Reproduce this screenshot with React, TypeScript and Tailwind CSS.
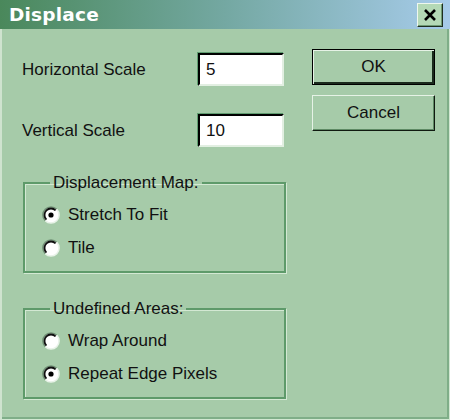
import React from 'react';

function Radio({ checked }: { checked?: boolean }) {
  return (
    <svg width="18" height="18" viewBox="0 0 18 18" className="shrink-0">
      <circle cx="9" cy="9" r="8" fill="#ffffff" />
      <path d="M3.3 14.7 A8 8 0 0 1 14.7 3.3" fill="none" stroke="#6f8f74" strokeWidth="1.6" />
      <path d="M4.4 13.6 A6.4 6.4 0 0 1 13.6 4.4" fill="none" stroke="#101010" strokeWidth="1.8" />
      <path d="M14.7 3.3 A8 8 0 0 1 3.3 14.7" fill="none" stroke="#e8f2e8" strokeWidth="1.6" />
      {checked && <circle cx="9" cy="9" r="2.6" fill="#000000" />}
    </svg>
  );
}

function Field({ label, value }: { label: string; value: string }) {
  return (
    <div className="flex items-center justify-between h-[33px]">
      <span>{label}</span>
      <div className="w-[86px] h-[33px] bg-white border-2 border-t-black border-l-black border-r-[#e2efe2] border-b-[#e2efe2] shadow-[-1px_-1px_0_#5f9d70] flex items-center pl-[6px]">
        {value}
      </div>
    </div>
  );
}

function Group({ title, options }: { title: string; options: { label: string; checked?: boolean }[] }) {
  return (
    <fieldset className="ml-[1px] border-2 border-[#5e9a6a] shadow-[inset_1px_1px_0_#d3e8d3,1px_1px_0_#d3e8d3] pl-[17px] pt-[5px] pb-[7px]">
      <legend className="ml-[8px] px-[3px] h-[20px] leading-[20px]">{title}</legend>
      {options.map(o => (
        <div key={o.label} className="flex items-center h-[33px] gap-[8px]">
          <Radio checked={o.checked} />
          <span>{o.label}</span>
        </div>
      ))}
    </fieldset>
  );
}

export default function App() {
  return (
    <div className="w-[450px] h-[420px] bg-[#a6cba9] flex flex-col text-[17px] text-[#111] font-['Liberation_Sans',Arial,sans-serif] shadow-[inset_2px_0_0_#cfe3cf,inset_-1px_-1px_0_#d2e7d2,inset_-3px_-3px_0_#7fae88] overflow-hidden">
      {/* Title bar */}
      <div className="h-[29px] shrink-0 flex items-center justify-between pl-[9px] pr-[7px] bg-linear-to-r from-[#4a885b] via-[#74a8a2] via-50% to-[#a6cbea]">
        <span className="text-white font-bold text-[18.5px] font-['DejaVu_Sans',sans-serif] tracking-[0.2px]">Displace</span>
        <div className="w-[26px] h-[24px] bg-[#b4d9b6] border border-t-[#eef7ee] border-l-[#eef7ee] border-r-[#1e2e20] border-b-[#1e2e20] shadow-[inset_-1px_-1px_0_#6e9a74] flex items-center justify-center">
          <svg width="14" height="12" viewBox="0 0 14 12">
            <path d="M2 1 L12 11 M12 1 L2 11" stroke="#000" strokeWidth="2.6" />
          </svg>
        </div>
      </div>

      {/* Body */}
      <div className="flex flex-1">
        <div className="w-[286px] pl-[22px] flex flex-col">
          <div className="mt-[24px] mr-[2px]">
            <Field label="Horizontal Scale" value="5" />
          </div>
          <div className="mt-[28px] mr-[2px]">
            <Field label="Vertical Scale" value="10" />
          </div>
          <div className="mt-[26px]">
            <Group
              title="Displacement Map:"
              options={[{ label: 'Stretch To Fit', checked: true }, { label: 'Tile' }]}
            />
          </div>
          <div className="mt-[26px]">
            <Group
              title="Undefined Areas:"
              options={[{ label: 'Wrap Around' }, { label: 'Repeat Edge Pixels', checked: true }]}
            />
          </div>
        </div>

        <div className="pl-[26px] pt-[20px] flex flex-col gap-[10px]">
          <button className="w-[123px] h-[36px] bg-[#a6cba9] border border-black shadow-[inset_1px_1px_0_#e6f2e6,inset_-2px_-2px_0_#1a2a1c] text-[17px]">
            OK
          </button>
          <button className="w-[123px] h-[36px] bg-[#a6cba9] border border-t-[#e6f2e6] border-l-[#e6f2e6] border-r-[#101a10] border-b-[#101a10] shadow-[inset_-1px_-1px_0_#5e8a64] text-[17px]">
            Cancel
          </button>
        </div>
      </div>
    </div>
  );
}
